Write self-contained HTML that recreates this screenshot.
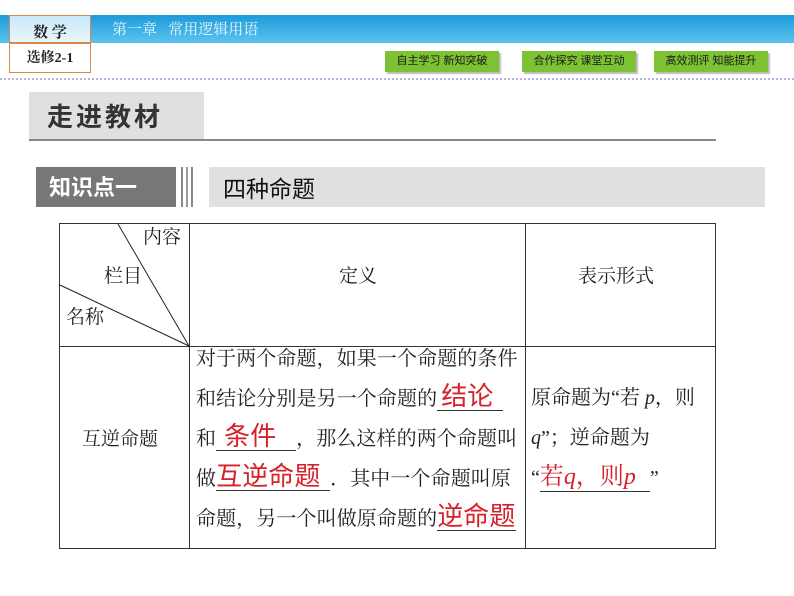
<!DOCTYPE html>
<html><head><meta charset="utf-8"><style>
*{margin:0;padding:0;box-sizing:border-box}
body{width:794px;height:596px;background:#fff;position:relative;overflow:hidden;font-family:"Liberation Serif","Noto Serif CJK SC",serif;color:#222}
.a{position:absolute}
.btn{position:absolute;top:51px;height:21px;background:#7cc232;color:#1a1a1a;font-size:11px;text-align:center;line-height:21px;box-shadow:2px 2px 1px #bbb;font-family:"Liberation Sans","Noto Sans CJK SC",sans-serif}
.r{color:#d6202a;font-family:"Liberation Sans","Noto Sans CJK SC",sans-serif}
.t{font-size:18px;line-height:41px}
.u{display:inline-block;border-bottom:1px solid #333;line-height:28px}
</style></head><body>
<div class="a" style="left:0;top:15px;width:794px;height:28px;background:linear-gradient(#1d9ad9,#5cc3f0)"></div>
<div class="a" style="left:9px;top:15px;width:82px;height:28px;background:linear-gradient(#c8e8f8,#e8f6fd);border:1px solid #d98a4a;font-size:15px;font-weight:bold;text-align:center;line-height:34px">数 学</div>
<div class="a" style="left:9px;top:43px;width:82px;height:30px;border:1px solid #d98a4a;font-size:14px;font-weight:bold;text-align:center;line-height:30px">选修2-1</div>
<div class="a" style="left:112px;top:19px;color:#e8f6ff;font-size:15px;line-height:22px">第一章&nbsp;&nbsp;&nbsp;常用逻辑用语</div>
<div class="btn" style="left:385px;width:114px">自主学习 新知突破</div>
<div class="btn" style="left:522px;width:114px">合作探究 课堂互动</div>
<div class="btn" style="left:654px;width:114px">高效测评 知能提升</div>
<div class="a" style="left:0;top:78px;width:794px;border-top:2px dotted #b8b4e0"></div>
<div class="a" style="left:29px;top:92px;width:175px;height:47px;background:#e0e0e0;font-family:'Liberation Sans','Noto Sans CJK SC',sans-serif;font-weight:bold;font-size:26px;color:#333;line-height:50px;padding-left:18px;letter-spacing:3px">走进教材</div>
<div class="a" style="left:29px;top:139px;width:687px;height:2px;background:#888"></div>
<div class="a" style="left:36px;top:167px;width:140px;height:40px;background:#777;color:#fff;font-family:'Liberation Sans','Noto Sans CJK SC',sans-serif;font-weight:bold;font-size:22px;line-height:42px;padding-left:13px">知识点一</div>
<div class="a" style="left:181px;top:167px;width:12px;height:40px;border-left:2px solid #888;border-right:2px solid #888;background:linear-gradient(90deg,#fff 0 3px,#999 3px 5px,#fff 5px)"></div>
<div class="a" style="left:209px;top:167px;width:556px;height:40px;background:#e0e0e0;font-family:'Liberation Sans','Noto Sans CJK SC',sans-serif;font-size:23px;line-height:44px;padding-left:14px;color:#111">四种命题</div>
<div class="a" style="left:59px;top:223px;width:657px;height:326px;border:1px solid #333"></div>
<div class="a" style="left:189px;top:223px;width:1px;height:326px;background:#333"></div>
<div class="a" style="left:525px;top:223px;width:1px;height:326px;background:#333"></div>
<div class="a" style="left:59px;top:346px;width:657px;height:1px;background:#333"></div>
<svg class="a" style="left:0;top:0" width="794" height="596"><line x1="118" y1="224" x2="189" y2="346" stroke="#222"/><line x1="60" y1="285" x2="189" y2="346" stroke="#222"/></svg>
<div class="a t" style="left:143px;top:218px;line-height:40px;font-size:19px">内容</div>
<div class="a t" style="left:104px;top:256px;font-size:19px">栏目</div>
<div class="a t" style="left:66px;top:297px;font-size:19px">名称</div>
<div class="a t" style="left:339px;top:256px;font-size:19px">定义</div>
<div class="a t" style="left:578px;top:256px;font-size:19px">表示形式</div>
<div class="a t" style="left:82px;top:419px;font-size:19px">互逆命题</div>
<div class="a t" style="left:196px;top:339px;width:330px;line-height:40px;font-size:20px;letter-spacing:0.1px;white-space:nowrap">对于两个命题，如果一个命题的条件<br>和结论分别是另一个命题的<span class="u r" style="width:66px;font-size:26px;padding-left:4px">结论</span><br>和<span class="u r" style="width:80px;font-size:26px;padding-left:8px">条件</span>，那么这样的两个命题叫<br>做<span class="u r" style="width:114px;font-size:26px">互逆命题</span>．其中一个命题叫原<br>命题，另一个叫做原命题的<span class="u r" style="font-size:26px">逆命题</span></div>
<div class="a t" style="left:531px;top:378px;line-height:40px;font-size:20px;white-space:nowrap">原命题为“若 <i>p</i>，则<br><i>q</i>”；逆命题为<br>“<span class="u r" style="width:110px;font-size:24px;font-family:'Liberation Serif','Noto Serif CJK SC',serif">若<i>q</i>，则<i>p</i></span>”</div>
</body></html>
